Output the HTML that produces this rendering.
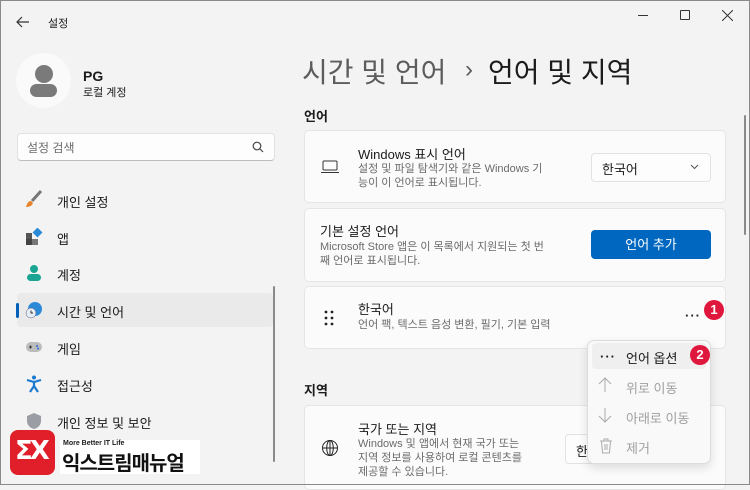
<!DOCTYPE html>
<html><head><meta charset="utf-8"><style>
*{margin:0;padding:0;box-sizing:border-box}
body{width:750px;height:485px;overflow:hidden;background:#f3f3f3;font-family:"Liberation Sans","Noto Sans CJK KR",sans-serif;color:#1b1b1b;position:relative}
.a{position:absolute;white-space:nowrap}
.card{position:absolute;left:304px;width:422px;background:#fbfbfb;border:1px solid #e5e5e5;border-radius:5px}
.t{font-size:13px;color:#1b1b1b}
.d{font-size:11px;color:#6b6b6b;line-height:14px}
.nav{position:absolute;left:57px;font-size:13px;color:#1b1b1b}
.ic{position:absolute;left:25px;width:18px;height:18px}
.m{position:absolute;left:626px;font-size:13px;color:#a0a0a0}
.badge{position:absolute;width:20px;height:20px;border-radius:50%;background:#e0173d;color:#fff;font-size:13px;font-weight:bold;text-align:center;line-height:20px}
</style></head><body>
<div style="position:absolute;inset:0;border:1px solid #8a8a8a;pointer-events:none;z-index:9"></div>
<svg class="a" style="left:15px;top:15px" width="16" height="14"><path d="M7 2L2 7l5 5M2 7h12" stroke="#333" stroke-width="1.2" fill="none"/></svg>
<div class="a" style="left:48px;top:15px;font-size:11px">설정</div>
<div class="a" style="left:638px;top:15px;width:10px;height:1px;background:#333"></div>
<div class="a" style="left:680px;top:10px;width:10px;height:10px;border:1px solid #333;border-radius:1px"></div>
<svg class="a" style="left:722px;top:10px" width="11" height="11"><path d="M0 0L11 11M11 0L0 11" stroke="#333" stroke-width="1"/></svg>
<div class="a" style="left:16px;top:53px;width:55px;height:55px;border-radius:50%;background:#fafafa"></div>
<div class="a" style="left:35px;top:65px;width:18px;height:18px;border-radius:50%;background:#7a7a7a"></div>
<div class="a" style="left:30px;top:84px;width:27px;height:13px;border-radius:7px;background:#7a7a7a"></div>
<div class="a" style="left:83px;top:68px;font-size:14px;font-weight:bold">PG</div>
<div class="a" style="left:83px;top:84px;font-size:11px">로컬 계정</div>
<div class="a" style="left:17px;top:133px;width:258px;height:28px;background:#fdfdfd;border:1px solid #e2e2e2;border-bottom:1px solid #bdbdbd;border-radius:4px"></div>
<div class="a" style="left:27px;top:139px;font-size:12px;color:#6b6b6b">설정 검색</div>
<svg class="a" style="left:252px;top:141px" width="12" height="12"><circle cx="5" cy="5" r="3.8" stroke="#444" stroke-width="1.2" fill="none"/><path d="M8 8l3 3" stroke="#444" stroke-width="1.2"/></svg>
<svg class="ic" style="top:190px" viewBox="0 0 18 18"><path d="M16 1L7 11" stroke="#777" stroke-width="3"/><path d="M6 11c-3 0-4 3-5 6 3 0 6-1 7-4z" fill="#e8822a"/></svg>
<div class="nav" style="top:192px">개인 설정</div>
<svg class="ic" style="top:228px" viewBox="0 0 18 18"><rect x="1" y="5" width="6" height="6" fill="#555"/><rect x="1" y="11" width="6" height="6" fill="#444"/><rect x="7" y="11" width="6" height="6" fill="#777"/><rect x="9" y="1" width="7" height="7" fill="#2a8ad8" transform="rotate(45 12.5 4.5)"/></svg>
<div class="nav" style="top:229px">앱</div>
<svg class="ic" style="top:264px" viewBox="0 0 18 18"><circle cx="9" cy="5" r="4" fill="#1aa592"/><rect x="2" y="10" width="14" height="7" rx="3.5" fill="#1aa592"/></svg>
<div class="nav" style="top:265px">계정</div>
<div class="a" style="left:17px;top:293px;width:256px;height:34px;background:#eaeaea;border-radius:4px"></div>
<div class="a" style="left:16px;top:303px;width:3px;height:15px;background:#005fb8;border-radius:2px"></div>
<svg class="ic" style="top:301px" viewBox="0 0 18 18"><circle cx="10" cy="8" r="7" fill="#2a8ad8"/><circle cx="6" cy="12" r="5" fill="#e6eef5" stroke="#557" stroke-width=".5"/><path d="M6 9.5V12h2" stroke="#333" fill="none"/></svg>
<div class="nav" style="top:302px">시간 및 언어</div>
<svg class="ic" style="top:338px" viewBox="0 0 18 18"><rect x="1" y="4" width="16" height="10" rx="5" fill="#bcbcbc"/><path d="M4 9h3M5.5 7.5v3" stroke="#333"/><circle cx="12" cy="8" r="1" fill="#2a6ad8"/><circle cx="13" cy="10.5" r="1" fill="#2a6ad8"/></svg>
<div class="nav" style="top:339px">게임</div>
<svg class="ic" style="top:375px" viewBox="0 0 18 18"><circle cx="9" cy="2.5" r="2" fill="#1a7ad0"/><path d="M2 5l7 2 7-2M9 7v4l-4 6M9 11l4 6" stroke="#1a7ad0" stroke-width="2.2" fill="none"/></svg>
<div class="nav" style="top:376px">접근성</div>
<svg class="ic" style="top:412px" viewBox="0 0 18 18"><path d="M9 1l7 3v5c0 4-3 7-7 8-4-1-7-4-7-8V4z" fill="#9a9ea4"/></svg>
<div class="nav" style="top:413px">개인 정보 및 보안</div>
<div class="a" style="left:273px;top:286px;width:2px;height:176px;background:#8a8a8a;border-radius:1px"></div>
<div class="a" style="left:10px;top:430px;width:45px;height:45px;background:#e01f2a;border-radius:8px"></div>
<div class="a" style="left:15px;top:436px;font-size:26px;font-weight:bold;color:#fff;font-family:'DejaVu Sans',sans-serif;letter-spacing:-3px">ΣX</div>
<div class="a" style="left:60px;top:440px;width:140px;height:34px;background:#fff"></div>
<div class="a" style="left:63px;top:440px;font-size:7px;font-weight:bold">More Better IT Life</div>
<div class="a" style="left:62px;top:447px;font-size:20px;font-weight:bold;letter-spacing:-1px;color:#111">익스트림매뉴얼</div>
<div class="a" style="left:302px;top:51px;font-size:28px;color:#5c5c5c">시간 및 언어</div>
<div class="a" style="left:465px;top:56px;font-size:24px;color:#5c5c5c">›</div>
<div class="a" style="left:488px;top:51px;font-size:28px;color:#1b1b1b">언어 및 지역</div>
<div class="a" style="left:304px;top:106px;font-size:13px;font-weight:bold">언어</div>
<div class="card" style="top:130px;height:73px"></div>
<svg class="a" style="left:320px;top:160px" width="20" height="14"><rect x="3" y="1" width="14" height="9" rx="1" stroke="#333" fill="none"/><path d="M1 12.5h18" stroke="#333"/></svg>
<div class="a t" style="left:358px;top:144px">Windows 표시 언어</div>
<div class="a d" style="left:358px;top:162px">설정 및 파일 탐색기와 같은 Windows 기<br>능이 이 언어로 표시됩니다.</div>
<div class="a" style="left:591px;top:153px;width:120px;height:29px;background:#fdfdfd;border:1px solid #e2e2e2;border-radius:4px"></div>
<div class="a" style="left:602px;top:159px;font-size:13px">한국어</div>
<svg class="a" style="left:690px;top:164px" width="9" height="6"><path d="M1 1l3.5 3.5L8 1" stroke="#555" fill="none"/></svg>
<div class="card" style="top:208px;height:74px"></div>
<div class="a t" style="left:320px;top:221px">기본 설정 언어</div>
<div class="a d" style="left:320px;top:240px">Microsoft Store 앱은 이 목록에서 지원되는 첫 번<br>째 언어로 표시됩니다.</div>
<div class="a" style="left:591px;top:230px;width:120px;height:29px;background:#0067c0;border-radius:4px;color:#fff;font-size:13px;text-align:center;line-height:29px">언어 추가</div>
<div class="card" style="top:286px;height:63px"></div>
<svg class="a" style="left:324px;top:310px" width="12" height="16"><g fill="#222"><circle cx="2" cy="2" r="1.4"/><circle cx="8" cy="2" r="1.4"/><circle cx="2" cy="8" r="1.4"/><circle cx="8" cy="8" r="1.4"/><circle cx="2" cy="14" r="1.4"/><circle cx="8" cy="14" r="1.4"/></g></svg>
<div class="a t" style="left:358px;top:299px">한국어</div>
<div class="a d" style="left:358px;top:318px">언어 팩, 텍스트 음성 변환, 필기, 기본 입력</div>
<div class="a" style="left:685px;top:308px;font-size:13px;font-weight:bold;letter-spacing:1px">···</div>
<div class="badge" style="left:704px;top:300px">1</div>
<div class="a" style="left:304px;top:380px;font-size:13px;font-weight:bold">지역</div>
<div class="card" style="top:405px;height:85px"></div>
<svg class="a" style="left:321px;top:439px" width="18" height="18"><circle cx="9" cy="9" r="7.5" stroke="#222" fill="none"/><ellipse cx="9" cy="9" rx="3.3" ry="7.5" stroke="#222" fill="none"/><path d="M1.5 9h15M9 1.5v15" stroke="#222"/></svg>
<div class="a t" style="left:358px;top:419px">국가 또는 지역</div>
<div class="a d" style="left:358px;top:437px">Windows 및 앱에서 현재 국가 또는<br>지역 정보를 사용하여 로컬 콘텐츠를<br>제공할 수 있습니다.</div>
<div class="a" style="left:565px;top:434px;width:120px;height:30px;background:#fdfdfd;border:1px solid #e2e2e2;border-radius:4px"></div>
<div class="a" style="left:576px;top:441px;font-size:13px">한</div>
<div class="a" style="left:587px;top:340px;width:124px;height:124px;background:#f9f9f9;border:1px solid #dcdcdc;border-radius:7px;box-shadow:0 4px 10px rgba(0,0,0,.12)"></div>
<div class="a" style="left:592px;top:343px;width:114px;height:26px;background:#efefef;border-radius:4px"></div>
<div class="a" style="left:600px;top:349px;font-size:13px;font-weight:bold;letter-spacing:1px">···</div>
<div class="m" style="left:626px;top:348px;color:#1b1b1b">언어 옵션</div>
<div class="badge" style="left:690px;top:345px">2</div>
<svg class="a" style="left:598px;top:377px" width="14" height="16"><path d="M7 15V1M1 7l6-6 6 6" stroke="#aaa" fill="none"/></svg>
<div class="m" style="top:378px">위로 이동</div>
<svg class="a" style="left:598px;top:407px" width="14" height="16"><path d="M7 1v14M1 9l6 6 6-6" stroke="#aaa" fill="none"/></svg>
<div class="m" style="top:408px">아래로 이동</div>
<svg class="a" style="left:599px;top:438px" width="14" height="16"><path d="M1 3h12M5 3V1h4v2M2.5 3l1 12h7l1-12M6 6v6M8 6v6" stroke="#aaa" fill="none"/></svg>
<div class="m" style="top:438px">제거</div>
<div class="a" style="left:744px;top:115px;width:2px;height:120px;background:#8a8a8a;border-radius:1px"></div>
</body></html>
